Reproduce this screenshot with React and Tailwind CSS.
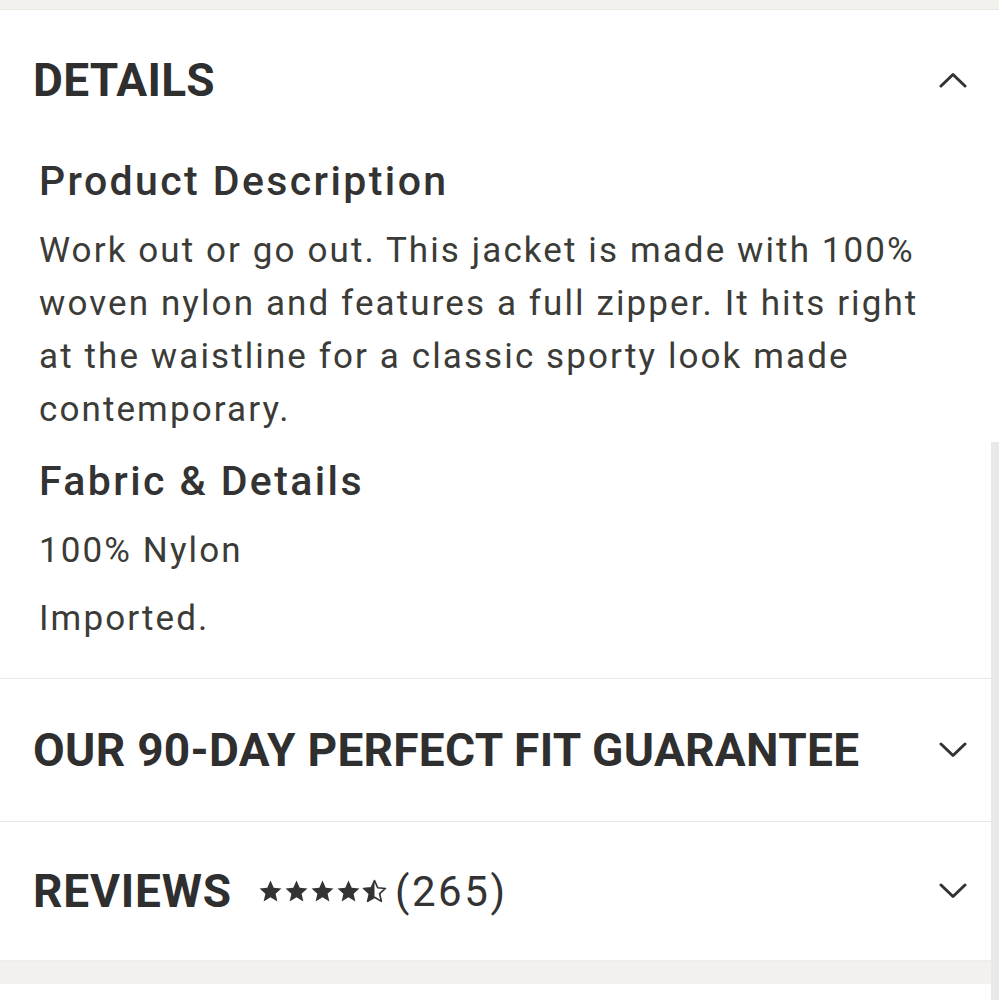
import React from 'react';

const Chevron = ({ up }) => (
  <svg className="w-[28px] h-[16px]" viewBox="0 0 28 16" fill="none" stroke="#333" strokeWidth={3} strokeLinecap="round" strokeLinejoin="round">
    {up ? <path d="M2 14L14 2.5 26 14" /> : <path d="M2 2L14 13.5 26 2" />}
  </svg>
);

const STAR = 'M12 1.5l3.1 6.9 7.4.7-5.6 5 1.7 7.4L12 17.6 5.4 21.5l1.7-7.4-5.6-5 7.4-.7z';

const Stars = () => (
  <div className="flex items-center gap-[1px]">
    {[0, 1, 2, 3].map((i) => (
      <svg key={i} className="w-[25px] h-[25px]" viewBox="0 0 24 24">
        <path d={STAR} fill="#333" />
      </svg>
    ))}
    <svg className="w-[25px] h-[25px]" viewBox="0 0 24 24">
      <defs>
        <clipPath id="half">
          <rect x="0" y="0" width="12" height="24" />
        </clipPath>
      </defs>
      <path d={STAR} fill="#333" clipPath="url(#half)" />
      <path d={STAR} fill="none" stroke="#333" strokeWidth={1.6} strokeLinejoin="round" />
    </svg>
  </div>
);

export default function App() {
  return (
    <div className="relative w-[999px] h-[1000px] bg-white text-[#333] overflow-hidden" style={{ fontFamily: 'Roboto, "Liberation Sans", sans-serif' }}>
      <div className="h-[10px] bg-[#f2f1ed] border-b border-[#e9e7e2]" />

      {/* Details */}
      <div className="border-b border-[#e8e8e8]">
        <div className="h-[140px] flex items-center justify-between pl-[33px] pr-[32px]">
          <h2 className="text-[46px] font-bold tracking-[0.3px] text-[#2f2f2f]">DETAILS</h2>
          <Chevron up />
        </div>
        <div className="pl-[39px] pr-[60px] pb-[33px] text-[#3b3b37]">
          <h3 className="text-[41px] font-medium leading-[52px] tracking-[2.4px] text-[#333] mt-[5px]">Product Description</h3>
          <p className="text-[35px] leading-[53px] tracking-[2.1px] mt-[17px]">
            Work out or go out. This jacket is made with 100% woven nylon and features a full zipper. It hits right at the waistline for a classic sporty look made contemporary.
          </p>
          <h3 className="text-[41px] font-medium leading-[52px] tracking-[2.4px] text-[#333] mt-[19px]">Fabric &amp; Details</h3>
          <p className="text-[35px] leading-[53px] tracking-[2.1px] mt-[17px]">100% Nylon</p>
          <p className="text-[35px] leading-[53px] tracking-[2.1px] mt-[15px]">Imported.</p>
        </div>
      </div>

      {/* Guarantee */}
      <div className="h-[143px] flex items-center justify-between pl-[33px] pr-[32px] border-b border-[#e8e8e8]">
        <h2 className="text-[46px] font-bold tracking-[0.3px] text-[#2f2f2f]">OUR 90-DAY PERFECT FIT GUARANTEE</h2>
        <Chevron />
      </div>

      {/* Reviews */}
      <div className="h-[140px] flex items-center justify-between pl-[33px] pr-[32px] border-b-2 border-[#eeeeee]">
        <div className="flex items-center">
          <h2 className="text-[46px] font-bold tracking-[0.8px] text-[#2f2f2f]">REVIEWS</h2>
          <div className="ml-[26px]"><Stars /></div>
          <span className="ml-[8px] text-[42px] tracking-[2.6px] text-[#333]">(265)</span>
        </div>
        <Chevron />
      </div>

      <div className="h-[22px] bg-[#f2f1ed]" />

      {/* scrollbar track */}
      <div className="absolute right-0 top-[442px] w-[8px] h-[558px] bg-[#e9e9e9]" />
    </div>
  );
}
